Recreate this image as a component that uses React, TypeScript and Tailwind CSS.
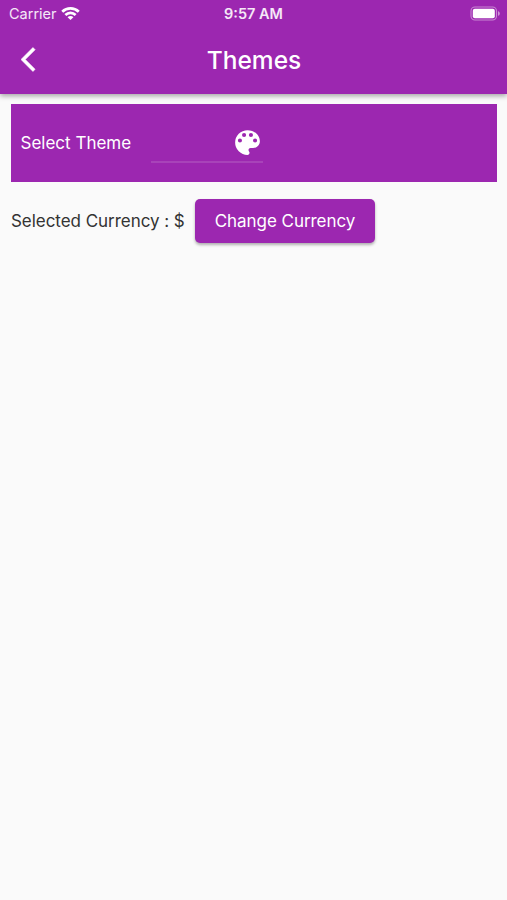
function Wifi() {
  return (
    <svg className="-mt-px ml-[4.5px] h-[15px] w-[19px]" viewBox="0 0 20 15" fill="none" stroke="white" strokeWidth="2.9">
      <path d="M1.3 5.6C6.2.9 13.8.9 18.7 5.6" />
      <path d="M4.6 9C7.7 6 12.3 6 15.4 9" />
      <path d="M10 14.4 6.9 11.4C8.6 9.8 11.4 9.8 13.1 11.4Z" fill="white" stroke="none" />
    </svg>
  );
}

function Battery() {
  return (
    <svg className="h-[15px] w-[31px]" viewBox="0 0 31 15">
      <rect x="1" y="1" width="25.5" height="13" rx="4" fill="none" stroke="white" strokeOpacity=".45" strokeWidth="1.1" />
      <rect x="2.8" y="2.8" width="22" height="9.4" rx="2" fill="white" />
      <path d="M28 5.2c2.4.7 2.4 3.9 0 4.6z" fill="white" fillOpacity=".5" />
    </svg>
  );
}

export default function App() {
  return (
    <div className="flex h-[900px] w-[507px] flex-col overflow-hidden bg-[#fafafa] font-['Inter','Liberation_Sans',sans-serif]">
      <header className="h-[94px] shrink-0 bg-[#9c27b0] text-white shadow-[0_2px_5px_rgba(0,0,0,0.35)]">
        <div className="grid h-[27px] grid-cols-3 items-center">
          <div className="flex items-center pl-[9px]">
            <span className="pt-px text-[14.5px] leading-none text-white/90">Carrier</span>
            <Wifi />
          </div>
          <span className="pt-[2px] text-center text-[14.5px] font-semibold leading-none text-white/90">9:57 AM</span>
          <div className="flex justify-end pr-[6px]">
            <Battery />
          </div>
        </div>
        <div className="grid h-[66px] grid-cols-3 items-center">
          <svg className="-mt-[2px] ml-[20.5px] h-[29px] w-[29px]" viewBox="0 0 24 24" fill="white" stroke="white" strokeWidth="0.5">
            <path d="M11.67 3.87 9.9 2.1 0 12l9.9 9.9 1.77-1.77L3.54 12z" />
          </svg>
          <h1 className="pl-px text-center text-[24.5px] font-medium leading-none">Themes</h1>
        </div>
      </header>
      <main className="flex flex-col pl-[11px] pr-[10px] pt-[10px] text-[17px] leading-none">
        <section className="flex h-[78px] items-center bg-[#9c27b0] pl-[9.5px] text-white">
          <span className="w-[130.5px] whitespace-nowrap">Select Theme</span>
          <div className="flex h-[40px] w-[112px] justify-end border-b-2 border-[#a843b9]">
            <svg className="-mr-[1px] mt-[3px] h-[33px] w-[33px]" viewBox="0 0 24 24" fill="white">
              <path d="M12 3a9 9 0 0 0 0 18c.83 0 1.5-.67 1.5-1.5 0-.39-.15-.74-.39-1.01-.23-.26-.38-.61-.38-.99 0-.83.67-1.5 1.5-1.5H16c2.76 0 5-2.24 5-5 0-4.42-4.03-8-9-8zm-5.5 9a1.5 1.5 0 1 1 0-3 1.5 1.5 0 0 1 0 3zm3-4a1.5 1.5 0 1 1 0-3 1.5 1.5 0 0 1 0 3zm5 0a1.5 1.5 0 1 1 0-3 1.5 1.5 0 0 1 0 3zm3 4a1.5 1.5 0 1 1 0-3 1.5 1.5 0 0 1 0 3z" />
            </svg>
          </div>
        </section>
        <div className="mt-[17px] flex h-[44px] items-center">
          <span className="w-[184px] whitespace-nowrap tracking-[-0.04px] text-[#333333]">Selected Currency : $</span>
          <button className="h-[44px] w-[180px] whitespace-nowrap rounded-[5px] bg-[#9c27b0] tracking-[-0.04px] text-white shadow-[0_2px_3px_rgba(0,0,0,0.3)]">
            Change Currency
          </button>
        </div>
      </main>
    </div>
  );
}
